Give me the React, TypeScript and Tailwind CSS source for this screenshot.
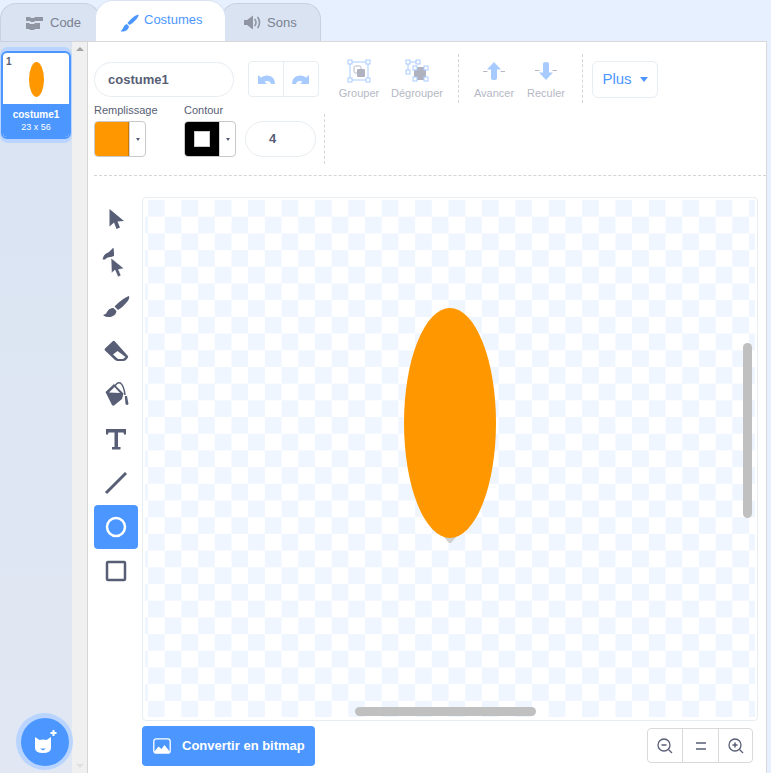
const FONT = "font-['Liberation_Sans',Arial,sans-serif]"

function ArrowTool() {
  return <svg width="20" height="24" viewBox="0 0 20 24"><path d="M4.500 3 L4.500 20.500 L9 16.500 L11.500 23 L15 21.500 L12.500 15.500 L19 15 Z" fill="#575e75" transform="translate(-1 -1)" /></svg>
}
function ReshapeTool() {
  return (
    <svg width="32" height="30" viewBox="4 4 32 30">
      <path d="M6.500 15.500 Q7 10 13 8 L17.500 3.500 L18 9 L18 12 L15 13 Q11 12.500 9 15.500Z" fill="#575e75" />
      <path d="M15 14 L15.500 29 L19 26 L22 33 L25 31.500 L22.500 25.500 L28 24.500Z" fill="#575e75" stroke="#fff" strokeWidth="0.600" />
    </svg>
  )
}
function BrushTool() {
  return (
    <svg width="28" height="24" viewBox="0 0 28 24">
      <path d="M27 1 Q28 3 25 7 Q21 12 16 15 L12.500 11.500 Q18 6 22 3.500 Q26 1 27 1Z" fill="#575e75" />
      <path d="M11.500 13 L14.500 16 Q14 20 10 21.500 Q5 23 1.500 20.500 Q1 20 2 19.500 Q4 19.500 5 17 Q7 13 11.500 13Z" fill="#575e75" />
    </svg>
  )
}
function EraserTool() {
  return (
    <svg width="26" height="24" viewBox="0 0 26 24">
      <path d="M10 2 L2 9.500 Q1 10.500 2 11.500 L12 21 Q13 22 15 22 L20 22 Q22 22 23 21 L25 18.500 Q25.500 17.500 24.500 16.500 L11.500 2 Q10.800 1.500 10 2Z" fill="#575e75" />
      <path d="M14.500 12 L22.500 18 L20 20 L15 20 L10 15.500Z" fill="#fff" />
    </svg>
  )
}
function FillTool() {
  return (
    <svg width="26" height="28" viewBox="7 4 26 28">
      <path d="M9.500 15 L18 7 L27.500 16.500 L26 22 L18 28.500 Q17 29 16 28Z" fill="#575e75" />
      <path d="M13 15.500 L18.500 10 L24 16Z" fill="#fff" />
      <path d="M18.500 10 Q21 4.500 24.500 6 Q28 9 29 18" fill="none" stroke="#575e75" strokeWidth="1.500" />
      <path d="M28.800 19 L31 19 L32.500 27 Q31 29 29.500 27Z" fill="#575e75" />
    </svg>
  )
}
function TextTool() {
  return (
    <svg width="22" height="22" viewBox="0 0 22 22">
      <path d="M1 1 L21 1 L21 6.500 L19 6.500 L18.500 4.500 L13 4.500 L13 19 L15.500 19 L15.500 21.500 L7 21.500 L7 19 L9.500 19 L9.500 4.500 L3.500 4.500 L3 6.500 L1 6.500Z" fill="#575e75" />
    </svg>
  )
}

function Checker() {
  return <div className="absolute inset-x-[2px] top-[2px] bottom-[3px] bg-[repeating-conic-gradient(#ffffff_0_25%,#f0f6ff_0_50%)] bg-size-[33.4px_33.4px] bg-position-[3px_0]" />
}

function ToolButton({ children, active }: { children: React.ReactNode; active?: boolean }) {
  return (
    <div className={`w-[44px] h-[44px] rounded-[4px] flex items-center justify-center ${active ? 'bg-[#4c97ff]' : ''}`}>
      {children}
    </div>
  )
}

function ActionButton({ label, width, children }: { label: string; width: string; children: React.ReactNode }) {
  return (
    <div className={`${width} flex flex-col items-center pt-[5px]`}>
      <div className="h-[24px] flex items-center justify-center">{children}</div>
      <span className="text-[11px] leading-[14px] mt-[3px] text-[#b5b8c4] whitespace-nowrap">{label}</span>
    </div>
  )
}

function Swatch({ children }: { children: React.ReactNode }) {
  return (
    <div className="w-[52px] h-[36px] flex border border-[#c9c9c9] rounded-[4px] overflow-hidden bg-white">
      {children}
      <div className="flex-1 flex items-center justify-center border-l border-[#d5d5d5]">
        <div className="w-0 h-0 border-x-[2.500px] border-x-transparent border-t-[3.500px] border-t-[#575e75]" />
      </div>
    </div>
  )
}

export default function App() {
  return (
    <div className={`${FONT} w-[771px] h-[773px] bg-[#e6f0ff] flex flex-col overflow-hidden`}>
      {/* onglets */}
      <div className="h-[41px] flex items-end shrink-0 relative z-10">
        <div className="w-[100px] -mr-[5px] h-[38px] pl-[25px] bg-[#d9e3f2] border border-[#c9d1df] border-b-0 rounded-t-[16px] flex items-center gap-[7px] text-[#7b8190] text-[13px]">
          <svg width="17" height="14" viewBox="0 0 17 14" className="mt-[1px]"><path d="M0 1 H4 L5 2 H8 L9 1 H17 V5 H9 L8 6 H5 L4 5 H0Z M0 7 H3 L4 8 H8 L9 7 H14 V13 H9 L8 14 H4 L3 13 H0Z" fill="#8f95a3" /></svg>
          <span>Code</span>
        </div>
        <div className="w-[131px] h-[41px] relative z-10 bg-white border border-[#d9e3f2] border-b-0 rounded-t-[18px] pl-[24px] flex items-center gap-[5px] text-[#4c97ff] text-[13px]">
          <svg width="19" height="19" viewBox="0 0 18 18" className="mt-[4px]">
            <path d="M17.500 0.500 Q18 2 15.500 5 Q12 9 9 10.500 L7 8.500 Q11 4 14 2 Q16.500 0.500 17.500 0.500Z" fill="#4c97ff" />
            <path d="M6.500 9.500 L8.500 11.500 Q8 15 5 16 Q2 17 0.500 16 Q2 15.500 3 13 Q4 10 6.500 9.500Z" fill="#4c97ff" />
          </svg>
          <span className="-mt-[2px]">Costumes</span>
        </div>
        <div className="w-[100px] -ml-[5px] h-[38px] pl-[22px] bg-[#d9e3f2] border border-[#c9d1df] border-b-0 rounded-tr-[16px] rounded-tl-[16px] flex items-center gap-[5px] text-[#7b8190] text-[13px]">
          <svg width="18" height="15" viewBox="0 0 18 15"><path d="M0 5 H3 L9 0.500 V14.500 L3 10 H0Z" fill="#8f95a3" /><path d="M11 4.500 Q13 7.500 11 10.500 M14 2.500 Q17 7.500 14 12.500" fill="none" stroke="#8f95a3" strokeWidth="1.600" strokeLinecap="round" /></svg>
          <span>Sons</span>
        </div>
      </div>

      <div className="flex flex-1 min-h-0">
        {/* liste des costumes */}
        <div className="w-[72px] shrink-0 relative bg-gradient-to-b from-[#d9e3f2] to-[#e1e8f3] pt-[5px] border-t border-[#c9d1df]">
          <div className="w-[72px] h-[96px] rounded-[8px] bg-[#b9d5ff] px-[1px] pt-[4px] pb-[4px]">
            <div className="relative w-full h-full rounded-[6px] border-2 border-[#4c97ff] bg-white overflow-hidden flex flex-col">
              <span className="absolute left-[3px] top-[3px] text-[10px] leading-[12px] font-bold text-[#575e75]">1</span>
              <div className="flex-1 flex items-center justify-center">
                <div className="w-[15px] h-[35px] rounded-[50%] bg-[#ff9800] mt-[1px]" />
              </div>
              <div className="h-[33px] bg-[#4c97ff] text-white text-center flex flex-col justify-center">
                <span className="text-[10px] leading-[13px] font-bold">costume1</span>
                <span className="text-[9px] leading-[12px]">23 x 56</span>
              </div>
            </div>
          </div>
          <div className="absolute left-[16px] bottom-[3px] w-[57px] h-[57px] rounded-full bg-[#b9d5ff] flex items-center justify-center">
            <div className="w-[48px] h-[48px] rounded-full bg-[#4c97ff] flex items-center justify-center">
              <svg width="26" height="26" viewBox="0 0 26 26">
                <path d="M3 8 L7.500 11 Q11 10 14.500 11 L19 8 L19 19 Q19 24 11 24 Q3 24 3 19Z" fill="#fff" />
                <path d="M8 19.500 H14 L11 21.500Z" fill="#4c97ff" />
                <path d="M21.500 1 V7 M18.500 4 H24.500" stroke="#fff" strokeWidth="2" />
              </svg>
            </div>
          </div>
        </div>

        {/* barre de défilement */}
        <div className="w-[16px] shrink-0 bg-[#f0f0f0] border-r border-[#d5d5d5] flex flex-col items-center justify-between py-[5px] border-t border-t-[#d5d5d5]">
          <div className="w-0 h-0 border-x-[4px] border-x-transparent border-b-[4px] border-b-[#a3a3a3]" />
          <div className="w-0 h-0 border-x-[4px] border-x-transparent border-t-[4px] border-t-[#e0e0e0]" />
        </div>

        {/* éditeur */}
        <div className="w-[679px] shrink-0 bg-white border-t border-r border-[#d9d9d9] pl-[6px] pt-[12px] flex flex-col">
          <div className="flex h-[50px] items-start text-[#575e75]">
            <div className="mt-[8px] w-[140px] h-[35px] rounded-[18px] border border-[#e8edf1] pl-[13px] flex items-center text-[13px] font-bold">costume1</div>
            <div className="mt-[7px] ml-[14px] w-[71px] h-[36px] border border-[#e8edf1] rounded-[4px] flex">
              <div className="flex-1 flex items-center justify-center border-r border-[#e8edf1]">
                <svg width="18" height="12" viewBox="0 0 18 12"><path d="M1 2 L1 11 L10 11 L7.500 8.500 Q11 7.500 13 9 L14 11 L18 11 Q18 5 13 3 Q8 1.500 4 4.500Z" fill="#a8cbff" /></svg>
              </div>
              <div className="flex-1 flex items-center justify-center">
                <svg width="18" height="12" viewBox="0 0 18 12"><path d="M17 2 L17 11 L8 11 L10.500 8.500 Q7 7.500 5 9 L4 11 L0 11 Q0 5 5 3 Q10 1.500 14 4.500Z" fill="#a8cbff" /></svg>
              </div>
            </div>
            <div className="ml-[11px] flex">
              <ActionButton label="Grouper" width="w-[58px]">
                <svg width="24" height="24" viewBox="0 0 24 24">
                  <rect x="3" y="3" width="18" height="18" fill="none" stroke="#a8cbff" />
                  <rect x="1" y="1" width="4" height="4" fill="#fff" stroke="#a8cbff" /><rect x="19" y="1" width="4" height="4" fill="#fff" stroke="#a8cbff" /><rect x="1" y="19" width="4" height="4" fill="#fff" stroke="#a8cbff" /><rect x="19" y="19" width="4" height="4" fill="#fff" stroke="#a8cbff" />
                  <rect x="7" y="7" width="7" height="7" rx="1.500" fill="none" stroke="#b5b8c4" />
                  <rect x="10" y="10" width="8" height="8" rx="1" fill="#b0b3bf" />
                </svg>
              </ActionButton>
              <ActionButton label="Dégrouper" width="w-[58px]">
                <svg width="24" height="24" viewBox="0 0 24 24">
                  <path d="M3 3 H13 M3 3 V13" stroke="#a8cbff" fill="none" />
                  <rect x="1" y="1" width="4" height="4" fill="#fff" stroke="#a8cbff" /><rect x="11" y="1" width="4" height="4" fill="#fff" stroke="#a8cbff" /><rect x="1" y="11" width="4" height="4" fill="#fff" stroke="#a8cbff" />
                  <rect x="9" y="8" width="12" height="13" fill="#b0b3bf" />
                  <rect x="8" y="7" width="4" height="4" fill="#fff" stroke="#a8cbff" /><rect x="19" y="7" width="4" height="4" fill="#fff" stroke="#a8cbff" /><rect x="8" y="18" width="4" height="4" fill="#fff" stroke="#a8cbff" /><rect x="19" y="18" width="4" height="4" fill="#fff" stroke="#a8cbff" />
                </svg>
              </ActionButton>
            </div>
            <div className="ml-[12px] h-[49px] border-l border-dashed border-[#d5d5d5]" />
            <div className="ml-[9px] flex">
              <ActionButton label="Avancer" width="w-[52px]">
                <svg width="22" height="20" viewBox="0 0 22 20">
                  <path d="M0 10.500 H4.500 M17.500 10.500 H22" stroke="#b5b8c4" />
                  <path d="M11 1 L18 8.500 L14 8.500 L14 17 Q14 19 11 19 Q8 19 8 17 L8 8.500 L4 8.500Z" fill="#a8cbff" />
                </svg>
              </ActionButton>
              <ActionButton label="Reculer" width="w-[52px]">
                <svg width="22" height="20" viewBox="0 0 22 20">
                  <path d="M0 9.500 H4.500 M17.500 9.500 H22" stroke="#b5b8c4" />
                  <path d="M11 19 L18 11.500 L14 11.500 L14 3 Q14 1 11 1 Q8 1 8 3 L8 11.500 L4 11.500Z" fill="#a8cbff" />
                </svg>
              </ActionButton>
            </div>
            <div className="ml-[10px] h-[49px] border-l border-dashed border-[#d5d5d5]" />
            <div className="mt-[7px] ml-[9px] w-[66px] h-[37px] rounded-[6px] border border-[#e8edf1] flex items-center justify-center gap-[8px] text-[#4c97ff] text-[15px]">
              <span>Plus</span>
              <div className="w-0 h-0 border-x-[4px] border-x-transparent border-t-[5px] border-t-[#4c97ff]" />
            </div>
          </div>

          <div className="flex h-[61px] items-start text-[#575e75] relative">
            <div className="w-[90px]">
              <div className="text-[11px] leading-[14px] h-[18px] -mt-[1px]">Remplissage</div>
              <Swatch><div className="w-[34px] bg-[#ff9800] border-r border-[#cc7a00]" /></Swatch>
            </div>
            <div className="w-[61px]">
              <div className="text-[11px] leading-[14px] h-[18px] -mt-[1px]">Contour</div>
              <Swatch>
                <div className="w-[34px] bg-black flex items-center justify-center">
                  <div className="w-[16px] h-[16px] bg-white border border-[#c9c9c9]" />
                </div>
              </Swatch>
            </div>
            <div className="mt-[17px] w-[71px] h-[36px] rounded-[18px] border border-[#e8edf1] flex items-center justify-center text-[13px] font-bold pr-[19px] pl-[3px]">4</div>
            <div className="ml-[8px] mt-[10px] h-[50px] border-l border-dashed border-[#d5d5d5]" />
          </div>

          <div className="mt-[10px] border-t border-dashed border-[#d5d5d5]" />

          <div className="flex mt-[21px] flex-1 min-h-0">
            <div className="w-[48px] shrink-0 flex flex-col pt-0">
              <ToolButton><ArrowTool /></ToolButton>
              <ToolButton><ReshapeTool /></ToolButton>
              <ToolButton><BrushTool /></ToolButton>
              <ToolButton><EraserTool /></ToolButton>
              <ToolButton><FillTool /></ToolButton>
              <ToolButton><TextTool /></ToolButton>
              <ToolButton>
                <svg width="24" height="24" viewBox="0 0 24 24"><path d="M2 22 L22 2" stroke="#575e75" strokeWidth="3" /></svg>
              </ToolButton>
              <ToolButton active>
                <svg width="22" height="22" viewBox="0 0 22 22"><circle cx="11" cy="11" r="9" fill="none" stroke="#fff" strokeWidth="2.500" /></svg>
              </ToolButton>
              <ToolButton>
                <svg width="22" height="22" viewBox="0 0 22 22"><rect x="2" y="2" width="18" height="18" rx="1" fill="none" stroke="#575e75" strokeWidth="2.500" /></svg>
              </ToolButton>
            </div>

            <div className="flex-1 flex flex-col">
              <div className="relative w-[616px] h-[524px] border border-[#e8edf1] rounded-[4px] overflow-hidden">
                <Checker />
                {/* ellipse et poignée */}
                <svg width="100" height="245" viewBox="0 0 100 245" className="absolute left-[257px] top-[105px]">
                  <path d="M44 234 L56 234 L51 240 L49 240Z" fill="#d0d0d0" />
                  <ellipse cx="50" cy="120" rx="46" ry="115" fill="#ff9800" />
                </svg>
                <div className="absolute left-[600px] top-[145px] w-[9px] h-[175px] rounded-full bg-[#c0c0c0]" />
                <div className="absolute left-[212px] top-[509px] w-[181px] h-[9px] rounded-full bg-[#c0c0c0]" />
              </div>
              <div className="flex justify-between mt-[5px] w-[611px]">
                <div className="w-[173px] h-[40px] rounded-[4px] bg-[#4c97ff] flex items-center pl-[11px] gap-[11px] text-white text-[13px] font-bold">
                  <svg width="18" height="16" viewBox="0 0 18 16">
                    <rect x="0.800" y="0.800" width="16.400" height="14.400" rx="2.500" fill="none" stroke="#fff" strokeWidth="1.300" />
                    <path d="M1 14 L5.500 8.500 L8.500 11 L11.500 7 L17 14 L17 15 L1 15Z" fill="#fff" />
                  </svg>
                  <span>Convertir en bitmap</span>
                </div>
                <div className="mt-[2px] w-[106px] h-[35px] rounded-[4px] border border-[#d9d9d9] flex">
                  <div className="w-[35px] flex items-center justify-center border-r border-[#d9d9d9]">
                    <svg width="16" height="16" viewBox="0 0 16 16"><circle cx="7" cy="7" r="6" fill="none" stroke="#575e75" strokeWidth="1.300" /><path d="M11.500 11.500 L15 15" stroke="#575e75" strokeWidth="1.300" /><path d="M4.500 7 H9.500" stroke="#575e75" strokeWidth="1.500" /></svg>
                  </div>
                  <div className="w-[36px] flex items-center justify-center border-r border-[#d9d9d9]">
                    <svg width="10" height="8" viewBox="0 0 10 8"><path d="M0 1 H10 M0 7 H10" stroke="#575e75" strokeWidth="1.600" /></svg>
                  </div>
                  <div className="flex-1 flex items-center justify-center">
                    <svg width="16" height="16" viewBox="0 0 16 16"><circle cx="7" cy="7" r="6" fill="none" stroke="#575e75" strokeWidth="1.300" /><path d="M11.500 11.500 L15 15" stroke="#575e75" strokeWidth="1.300" /><path d="M4.500 7 H9.500 M7 4.500 V9.500" stroke="#575e75" strokeWidth="1.500" /></svg>
                  </div>
                </div>
              </div>
            </div>
          </div>
        </div>
      </div>
    </div>
  )
}
